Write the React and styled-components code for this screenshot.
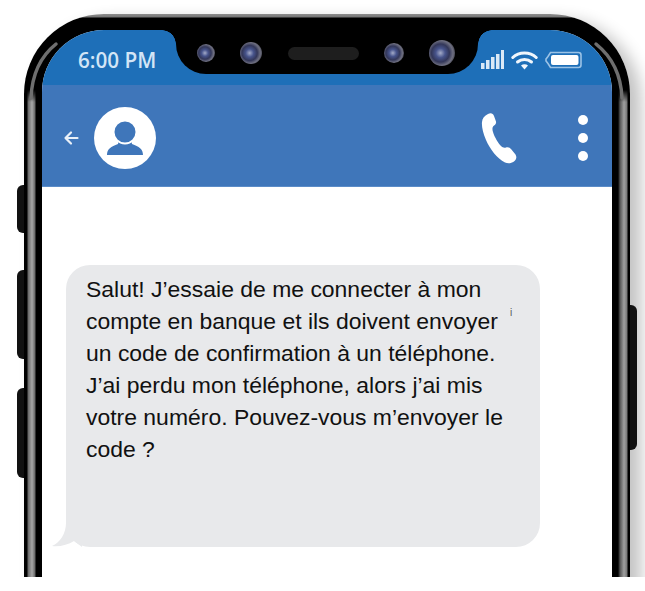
import styled, { createGlobalStyle } from "styled-components";

const GlobalStyle = createGlobalStyle`
  html, body {
    margin: 0;
    padding: 0;
    background: #fff;
  }
`;

const LINES = [
  "Salut! J’essaie de me connecter à mon",
  "compte en banque et ils doivent envoyer",
  "un code de confirmation à un téléphone.",
  "J’ai perdu mon téléphone, alors j’ai mis",
  "votre numéro. Pouvez-vous m’envoyer le",
  "code ?",
];

export default function App() {
  return (
    <Page>
      <GlobalStyle />
      <Crop>
        <Phone>
          <SideButton $top={171} $height={48} />
          <SideButton $top={256} $height={89} />
          <SideButton $top={374} $height={90} />
          <SideButton $right $top={291} $height={145} />
          <EdgeGlints />
          <Screen>
            <StatusBar>
              <Ear>
                <Time>6:00 PM</Time>
              </Ear>
              <Notch>
                <Camera $size={18} />
                <Camera $size={22} />
                <Speaker />
                <Camera $size={20} />
                <Camera $size={26} />
              </Notch>
              <Ear $right>
                <SignalIcon />
                <WifiIcon />
                <BatteryIcon />
              </Ear>
            </StatusBar>
            <Header>
              <HeaderLeft>
                <BackArrow />
                <Avatar />
              </HeaderLeft>
              <HeaderRight>
                <CallIcon />
                <Dots>
                  <Dot />
                  <Dot />
                  <Dot />
                </Dots>
              </HeaderRight>
            </Header>
            <Thread>
              <Bubble>
                <Tail />
                {LINES.map((line) => (
                  <Line key={line}>{line}</Line>
                ))}
                <Speck>i</Speck>
              </Bubble>
            </Thread>
          </Screen>
        </Phone>
      </Crop>
    </Page>
  );
}

function EdgeGlints() {
  return (
    <Glints width="606" height="100" viewBox="0 0 606 100">
      <g fill="none" stroke="#6f6f6f" strokeWidth="3.500" strokeLinecap="round">
        <path d="M32 30C17 42 8 60 7 84" />
        <path d="M572 30C587 42 597 60 598 84" />
      </g>
    </Glints>
  );
}

function SignalIcon() {
  return (
    <svg width="23" height="20" viewBox="0 0 23 20">
      <g fill="#dbe9f6">
        <rect x="0" y="13" width="3.500" height="6" />
        <rect x="5" y="10" width="3.500" height="9" />
        <rect x="10" y="7" width="3.500" height="12" />
        <rect x="15" y="4" width="3.500" height="15" />
        <rect x="20" y="0" width="3" height="19" />
      </g>
    </svg>
  );
}

function WifiIcon() {
  return (
    <svg width="27" height="20" viewBox="0 0 27 20">
      <g fill="none" stroke="#f0f6fc" strokeWidth="3" strokeLinecap="round">
        <path d="M1.800 7.500C8 1.500 19 1.500 25.200 7.500" />
        <path d="M6.500 12C10.500 8.500 16.500 8.500 20.500 12" />
      </g>
      <path d="M10 15.400C12 14 15 14 17 15.400L13.500 19.400Z" fill="#f0f6fc" />
    </svg>
  );
}

function BatteryIcon() {
  return (
    <svg width="37" height="18" viewBox="0 0 37 18">
      <path
        d="M5.500 1.500H33.500a2.500 2.500 0 0 1 2.500 2.500V14a2.500 2.500 0 0 1-2.500 2.500H5.500L3 12.500L1 10V8L3 5.500Z"
        fill="none"
        stroke="#9cc3e6"
        strokeWidth="1.600"
      />
      <rect x="6" y="4" width="27.500" height="10" rx="2" fill="#fff" />
    </svg>
  );
}

function BackArrow() {
  return (
    <svg width="16" height="16" viewBox="0 0 16 16">
      <path
        d="M14.500 8H2.500M8 2.500L2.500 8 8 13.500"
        fill="none"
        stroke="#e9f0f8"
        strokeWidth="2.200"
        strokeLinecap="round"
        strokeLinejoin="round"
      />
    </svg>
  );
}

function Avatar() {
  return (
    <svg width="62" height="62" viewBox="0 0 62 62">
      <circle cx="31" cy="31" r="31" fill="#fff" />
      <path
        d="M13 48C13 42 17 39.500 24 37L25 32H37L38 37C45 39.500 49 42 49 48Z"
        fill="#3f76ba"
      />
      <circle cx="31" cy="25" r="11.500" fill="#3f76ba" stroke="#fff" strokeWidth="2" />
    </svg>
  );
}

function CallIcon() {
  return (
    <svg width="36" height="52" viewBox="0 0 36 52">
      <path
        d="M7 2C9.500 0.500 12 1 13 4L15 9.500C15.500 11.500 14 13 12.500 14C11.500 15 11 17 12 20C13.500 25 17 31 20 34C21.500 35.500 23 36 25 35.500C27 35 28.500 35.500 30 37L34.500 42.500C36 45 35.500 47.500 33 49.500C30 51.500 27 51.800 24 50.500C16 46.500 9 37 5 28C2 21 0.500 14 1 10C1.200 6.500 3.500 3.500 7 2Z"
        fill="#fff"
      />
    </svg>
  );
}

const Page = styled.div`
  width: 645px;
  height: 591px;
  background: #fff;
  overflow: hidden;
`;

const Crop = styled.div`
  height: 577px;
  padding: 14px 0 0 24px;
  box-sizing: border-box;
  overflow: hidden;
`;

const Phone = styled.div`
  position: relative;
  width: 606px;
  height: 640px;
  box-sizing: border-box;
  padding: 16px 18px 0;
  border-radius: 80px;
  background:
    linear-gradient(to bottom, #8d8d8d 0, #777 3px, #000 4px, #000 76px, rgba(0, 0, 0, 0) 88px),
    linear-gradient(
      to right,
      #000 0,
      #000 3px,
      #666 4px,
      #a8a8a8 8px,
      #666 11px,
      #000 12px,
      #000 594px,
      #555 596px,
      #a0a0a0 600px,
      #777 603px,
      #000 604px
    );
  box-shadow: 11px 6px 16px rgba(0, 0, 0, 0.24);
`;

const Glints = styled.svg`
  position: absolute;
  left: 0;
  top: 0;
  pointer-events: none;
`;

const SideButton = styled.div`
  position: absolute;
  top: ${(p) => p.$top}px;
  ${(p) => (p.$right ? "right: -7px;" : "left: -7px;")}
  width: 7px;
  height: ${(p) => p.$height}px;
  background: #111;
  border-radius: ${(p) => (p.$right ? "0 6px 6px 0" : "6px 0 0 6px")};
`;

const Screen = styled.div`
  position: relative;
  width: 570px;
  height: 620px;
  background: #fff;
  border-radius: 62px 62px 0 0;
  overflow: hidden;
`;

const StatusBar = styled.div`
  display: flex;
  align-items: flex-start;
  height: 55px;
  background: #1e6fb8;
`;

const Ear = styled.div`
  width: 134px;
  height: 55px;
  box-sizing: border-box;
  display: flex;
  align-items: center;
  gap: 7px;
  padding: ${(p) => (p.$right ? "5px 0 0 3px" : "5px 0 0 36px")};
`;

const Time = styled.span`
  font-family: "Open Sans", sans-serif;
  font-size: 20.700px;
  font-weight: 600;
  color: #d3e5f6;
  white-space: nowrap;
`;

const Notch = styled.div`
  position: relative;
  flex: none;
  width: 302px;
  height: 44px;
  box-sizing: border-box;
  display: flex;
  align-items: center;
  padding: 2px 23px 0 21px;
  justify-content: space-between;
  background: #000;
  border-radius: 0 0 30px 30px;

  &::before,
  &::after {
    content: "";
    position: absolute;
    top: 0;
    width: 14px;
    height: 14px;
  }

  &::before {
    left: -14px;
    background: radial-gradient(circle at 0 100%, rgba(0, 0, 0, 0) 13.500px, #000 14px);
  }

  &::after {
    right: -14px;
    background: radial-gradient(circle at 100% 100%, rgba(0, 0, 0, 0) 13.500px, #000 14px);
  }
`;

const Camera = styled.div`
  flex: none;
  width: ${(p) => p.$size}px;
  height: ${(p) => p.$size}px;
  border-radius: 50%;
  filter: blur(0.7px);
  background: radial-gradient(
    circle at 44% 50%,
    #a4abc8 0,
    #47548c 24%,
    #333759 46%,
    #6d6e80 64%,
    #3a3a40 82%,
    #0c0c0c 100%
  );
`;

const Speaker = styled.div`
  flex: none;
  width: 71px;
  height: 13px;
  border-radius: 7px;
  background: #1e1e1e;
`;

const Header = styled.div`
  height: 102px;
  box-sizing: border-box;
  display: flex;
  align-items: center;
  justify-content: space-between;
  padding: 4px 24px 0 21px;
  background: #3f76ba;
  border-bottom: 1px solid #5b8cc8;
`;

const HeaderLeft = styled.div`
  display: flex;
  align-items: center;
  gap: 15px;
`;

const HeaderRight = styled.div`
  display: flex;
  align-items: center;
  gap: 61px;
`;

const Dots = styled.div`
  display: flex;
  flex-direction: column;
  gap: 8px;
`;

const Dot = styled.div`
  width: 10px;
  height: 10px;
  border-radius: 50%;
  background: #fff;
`;

const Thread = styled.div`
  padding: 78px 72px 0 24px;
`;

const Bubble = styled.div`
  position: relative;
  height: 282px;
  box-sizing: border-box;
  padding: 8px 0 0 20px;
  background: #e8e9eb;
  border-radius: 24px;
`;

const Tail = styled.div`
  position: absolute;
  left: -14px;
  bottom: 0;
  width: 30px;
  height: 24px;
  background: #e8e9eb;
  clip-path: path("M14 0C14 10 8 20 0 23C7 24 16 22 22 18L30 24V0Z");
`;

const Line = styled.div`
  font-family: "Liberation Sans", Arial, sans-serif;
  font-size: 22.950px;
  line-height: 32px;
  color: #111;
  white-space: nowrap;
`;

const Speck = styled.span`
  position: absolute;
  left: 444px;
  top: 42px;
  font-family: "Liberation Sans", Arial, sans-serif;
  font-size: 10px;
  line-height: 12px;
  color: #555;
`;
